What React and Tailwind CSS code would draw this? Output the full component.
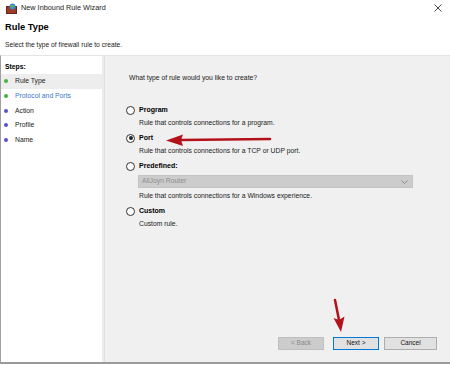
import React from 'react';

const steps = [
    { label: 'Rule Type', done: true, active: true },
    { label: 'Protocol and Ports', done: true, link: true },
    { label: 'Action' },
    { label: 'Profile' },
    { label: 'Name' },
];

function Radio({ checked }) {
    return (
        <span className="w-[9px] h-[9px] rounded-full border border-[#333] bg-white flex items-center justify-center shrink-0">
            {checked && <span className="w-[4px] h-[4px] rounded-full bg-[#222]"></span>}
        </span>
    );
}

function Option({ title, desc, checked, children }) {
    return (
        <div className="flex flex-col">
            <div className="flex items-center gap-[4px] h-[14px]">
                <Radio checked={checked} />
                <span className="font-bold text-black text-[7px]">{title}</span>
            </div>
            {children}
            <div className="pl-[13px] h-[14px] leading-[14px] mt-[-1px]">{desc}</div>
        </div>
    );
}

export default function App() {
    return (
        <div
            className="relative w-[450px] h-[365px] bg-white overflow-hidden text-[6.8px] text-[#1a1a1a]"
            style={{ fontFamily: '"Liberation Sans", Arial, sans-serif' }}
        >
            {/* Title bar */}
            <div className="flex items-center h-[16px] pl-[6px] pr-[6px]">
                <svg width="11" height="11" viewBox="0 0 11 11" className="shrink-0">
                    <rect x="0.5" y="3.5" width="10" height="7" fill="#9b3b2a" stroke="#6b2218" />
                    <circle cx="6.5" cy="3.5" r="3" fill="#3c8fd4" />
                    <path d="M5 2.5 Q6.5 1.5 8 3 Q7 5 5 4 Z" fill="#5dbb46" />
                </svg>
                <span className="ml-[4px] text-[7.3px] text-[#222]">New Inbound Rule Wizard</span>
                <svg width="8" height="8" viewBox="0 0 8 8" className="ml-auto mr-[2px]">
                    <path d="M0.5 0.5 L7.5 7.5 M7.5 0.5 L0.5 7.5" stroke="#333" strokeWidth="0.9" />
                </svg>
            </div>

            {/* Header */}
            <div className="pl-[5px] pt-[4px] h-[39px]">
                <div className="text-[9.3px] font-bold text-black leading-[14px]">Rule Type</div>
                <div className="text-[6.7px] leading-[10px] mt-[6px] text-[#222]">Select the type of firewall rule to create.</div>
            </div>

            {/* Body */}
            <div className="flex h-[309px] border-t border-[#e4e4e4] border-b-[2px] border-b-[#9a9a9a] border-l border-l-[#a0a0a0]">
                {/* Steps */}
                <div className="w-[103px] bg-white border-r-[2px] border-r-[#ececec] pt-[3px]">
                    <div className="pl-[4px] h-[15px] leading-[15px] font-bold text-black">Steps:</div>
                    <div className="flex flex-col">
                        {steps.map((s) => (
                            <div
                                key={s.label}
                                className={`flex items-center h-[14.7px] pl-[3px] ${s.active ? 'bg-[#ededed]' : ''}`}
                            >
                                <span
                                    className={`w-[4px] h-[4px] rounded-full ${s.done ? 'bg-[#45b03c]' : 'bg-[#5b52c8]'}`}
                                ></span>
                                <span className={`ml-[7px] ${s.link ? 'text-[#3a78c9]' : 'text-[#222]'}`}>{s.label}</span>
                            </div>
                        ))}
                    </div>
                </div>

                {/* Content */}
                <div className="flex-1 flex flex-col bg-[#f0f0f0] border-l border-[#e0e0e0] pl-[21px] pr-[13px]">
                    <div className="mt-[15px] h-[14px] leading-[14px] pl-[3px]">What type of rule would you like to create?</div>
                    <div className="flex flex-col gap-[1px] mt-[18px]">
                        <Option title="Program" desc="Rule that controls connections for a program." />
                        <Option checked title="Port" desc="Rule that controls connections for a TCP or UDP port." />
                        <Option title="Predefined:" desc="Rule that controls connections for a Windows experience.">
                            <div className="ml-[12px] mt-[2px] mb-[2px] w-[275px] h-[13px] bg-[#cccccc] border border-[#c4c4c4] flex items-center pl-[3px] text-[#8c8c8c]">
                                AllJoyn Router
                                <svg width="7" height="4" viewBox="0 0 7 4" className="ml-auto mr-[4px]">
                                    <path d="M0.5 0.5 L3.5 3.5 L6.5 0.5" fill="none" stroke="#8a8a8a" />
                                </svg>
                            </div>
                        </Option>
                        <Option title="Custom" desc="Custom rule." />
                    </div>

                    <div className="mt-auto mb-[12px] flex justify-end">
                        <button className="w-[46px] h-[13px] bg-[#cccccc] border border-[#bfbfbf] text-[#8a8a8a] text-[6.5px] leading-none">&lt; Back</button>
                        <button className="ml-[9px] w-[46px] h-[13px] bg-[#e1e1e1] border border-[#0078d7] text-[#111] text-[6.5px] leading-none">Next &gt;</button>
                        <button className="ml-[5px] w-[53px] h-[13px] bg-[#e1e1e1] border border-[#adadad] text-[#111] text-[6.5px] leading-none">Cancel</button>
                    </div>
                </div>
            </div>

            {/* Annotation arrows */}
            <svg className="absolute left-0 top-0 pointer-events-none" width="450" height="365">
                <path d="M270 139 L180 140" stroke="#b3121b" strokeWidth="2.5" fill="none" strokeLinecap="round" />
                <path d="M166 140.5 L183 134.5 L181 140 L183 146 Z" fill="#b3121b" />
                <path d="M335 300 L339 320" stroke="#b3121b" strokeWidth="2.5" fill="none" strokeLinecap="round" />
                <path d="M341 332 L333.5 318 L339 320 L344.5 316.5 Z" fill="#b3121b" />
            </svg>
        </div>
    );
}
